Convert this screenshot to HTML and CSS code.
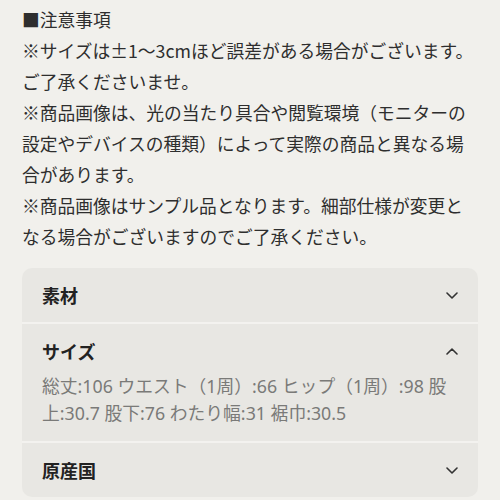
FILE: index.html
```html
<!DOCTYPE html>
<html lang="ja">
<head>
<meta charset="utf-8">
<link rel="stylesheet" href="styles.css">
</head>
<body>
<div class="page">
  <div class="notes">
    <p>■注意事項</p>
    <p>※サイズは±1〜3cmほど誤差がある場合がございます。ご了承くださいませ。</p>
    <p>※商品画像は、光の当たり具合や閲覧環境（モニターの設定やデバイスの種類）によって実際の商品と異なる場合があります。</p>
    <p>※商品画像はサンプル品となります。細部仕様が変更となる場合がございますのでご了承ください。</p>
  </div>
  <div class="acc">
    <div class="item">
      <div class="head"><span class="title">素材</span>
        <svg class="chev" viewBox="0 0 12 7" width="12" height="7"><path d="M1 1 L6 6 L11 1" fill="none" stroke="#333" stroke-width="1.6" stroke-linecap="round" stroke-linejoin="round"/></svg>
      </div>
    </div>
    <div class="item">
      <div class="head"><span class="title">サイズ</span>
        <svg class="chev" viewBox="0 0 12 7" width="12" height="7"><path d="M1 6 L6 1 L11 6" fill="none" stroke="#333" stroke-width="1.6" stroke-linecap="round" stroke-linejoin="round"/></svg>
      </div>
      <div class="body">総丈:106 ウエスト（1周）:66 ヒップ（1周）:98 股上:30.7 股下:76 わたり幅:31 裾巾:30.5</div>
    </div>
    <div class="item">
      <div class="head"><span class="title">原産国</span>
        <svg class="chev" viewBox="0 0 12 7" width="12" height="7"><path d="M1 1 L6 6 L11 1" fill="none" stroke="#333" stroke-width="1.6" stroke-linecap="round" stroke-linejoin="round"/></svg>
      </div>
    </div>
  </div>
</div>
</body>
</html>
```
FILE: styles.css
```css
html, body {
  margin: 0;
  padding: 0;
  background: #f1f0ec;
}
body {
  font-family: "Noto Sans CJK JP", "Noto Sans", sans-serif;
  color: #2e2e2e;
}
.page {
  padding: 4px 22px 0 22px;
}
.notes p {
  margin: 0;
  font-size: 17.75px;
  line-height: 31px;
}
.acc {
  margin-top: 16px;
  background: #e8e7e3;
  border-radius: 10px;
  overflow: hidden;
}
.item + .item {
  border-top: 2px solid #f3f2ef;
}
.item {
  padding: 14px 20px;
}
.head {
  display: flex;
  align-items: center;
  justify-content: space-between;
  height: 26px;
}
.title {
  font-size: 18px;
  font-weight: 700;
  color: #222;
}
.body {
  margin-top: 9px;
  font-family: "Noto Sans", "Noto Sans CJK JP", sans-serif;
  font-size: 17.8px;
  line-height: 27px;
  color: #7a7a78;
}
```
